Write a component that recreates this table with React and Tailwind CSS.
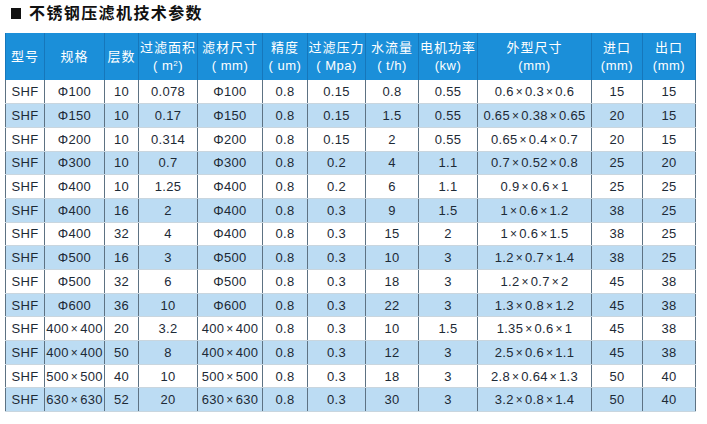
import React from 'react'

const widths = [39, 60, 34, 59, 65, 45, 58, 53, 59, 114, 51, 53]

const headers = [
  ['型号'],
  ['规格'],
  ['层数'],
  ['过滤面积', <>( m<sup className="text-[8px]">2</sup>)</>],
  ['滤材尺寸', '( mm)'],
  ['精度', '( um)'],
  ['过滤压力', '( Mpa)'],
  ['水流量', '( t/h)'],
  ['电机功率', '(kw)'],
  ['外型尺寸', '(mm)'],
  ['进口', '(mm)'],
  ['出口', '(mm)'],
]

const rows = [
  ['SHF', 'Φ100', '10', '0.078', 'Φ100', '0.8', '0.15', '0.8', '0.55', '0.6×0.3×0.6', '15', '15'],
  ['SHF', 'Φ150', '10', '0.17', 'Φ150', '0.8', '0.15', '1.5', '0.55', '0.65×0.38×0.65', '20', '15'],
  ['SHF', 'Φ200', '10', '0.314', 'Φ200', '0.8', '0.15', '2', '0.55', '0.65×0.4×0.7', '20', '15'],
  ['SHF', 'Φ300', '10', '0.7', 'Φ300', '0.8', '0.2', '4', '1.1', '0.7×0.52×0.8', '25', '20'],
  ['SHF', 'Φ400', '10', '1.25', 'Φ400', '0.8', '0.2', '6', '1.1', '0.9×0.6×1', '25', '25'],
  ['SHF', 'Φ400', '16', '2', 'Φ400', '0.8', '0.3', '9', '1.5', '1×0.6×1.2', '38', '25'],
  ['SHF', 'Φ400', '32', '4', 'Φ400', '0.8', '0.3', '15', '2', '1×0.6×1.5', '38', '25'],
  ['SHF', 'Φ500', '16', '3', 'Φ500', '0.8', '0.3', '10', '3', '1.2×0.7×1.4', '38', '25'],
  ['SHF', 'Φ500', '32', '6', 'Φ500', '0.8', '0.3', '18', '3', '1.2×0.7×2', '45', '38'],
  ['SHF', 'Φ600', '36', '10', 'Φ600', '0.8', '0.3', '22', '3', '1.3×0.8×1.2', '45', '38'],
  ['SHF', '400×400', '20', '3.2', '400×400', '0.8', '0.3', '10', '1.5', '1.35×0.6×1', '45', '38'],
  ['SHF', '400×400', '50', '8', '400×400', '0.8', '0.3', '12', '3', '2.5×0.6×1.1', '45', '38'],
  ['SHF', '500×500', '40', '10', '500×500', '0.8', '0.3', '18', '3', '2.8×0.64×1.3', '50', '40'],
  ['SHF', '630×630', '52', '20', '630×630', '0.8', '0.3', '30', '3', '3.2×0.8×1.4', '50', '40'],
]

// the × in the picture sits a bit apart from the numbers
const Cell = ({ text }) => {
  const parts = text.split('×')
  return (
    <>
      {parts.map((p, i) => (
        <React.Fragment key={i}>
          {i > 0 && <span className="mx-[2px] text-[12px]">×</span>}
          {p}
        </React.Fragment>
      ))}
    </>
  )
}

const App = () => {
  return (
    <div
      className="w-[707px] h-[424px] bg-white overflow-hidden"
      style={{ fontFamily: '"Liberation Sans", "Noto Sans CJK SC", sans-serif' }}
    >
      <div className="flex items-center h-[26px] pt-[1px] pl-[11px]">
        <div className="w-[10px] h-[11px] bg-[#111]" />
        <p className="ml-[8px] text-[16px] font-bold tracking-[1.4px] text-[#111] leading-none">
          不锈钢压滤机技术参数
        </p>
      </div>
      <table className="ml-[5px] mt-[7px] border-collapse table-fixed w-[690px]">
        <colgroup>
          {widths.map((w, i) => (
            <col key={i} style={{ width: w }} />
          ))}
        </colgroup>
        <thead>
          <tr className="h-[47px] bg-[#1b8fd9]">
            {headers.map((h, i) => (
              <th
                key={i}
                className="p-0 font-normal text-white text-[13px] leading-[16px] tracking-[1px] border-x border-[#1677bb] text-center whitespace-nowrap"
              >
                <div>{h[0]}</div>
                {h[1] && <div className="mt-[2px] tracking-[0.5px]">{h[1]}</div>}
              </th>
            ))}
          </tr>
        </thead>
        <tbody>
          {rows.map((r, ri) => (
            <tr
              key={ri}
              className={ri % 2 === 1 ? 'h-[23.7px] bg-[#bcdcf3]' : 'h-[23.7px] bg-white'}
            >
              {r.map((c, ci) => (
                <td
                  key={ci}
                  className="p-0 text-center text-[13px] leading-none text-[#1d2a36] tracking-[0.3px] border-x border-[#5d7283] border-b border-b-[#c9d6df] whitespace-nowrap"
                >
                  <Cell text={c} />
                </td>
              ))}
            </tr>
          ))}
        </tbody>
      </table>
    </div>
  )
}

export default App
